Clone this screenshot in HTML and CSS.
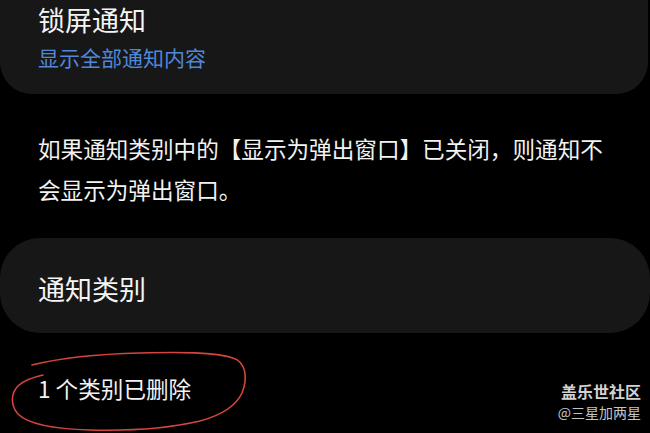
FILE: index.html
```html
<!DOCTYPE html>
<html lang="zh-CN">
<head>
    <meta charset="UTF-8">
    <meta name="viewport" content="width=device-width, initial-scale=1.0">
    <title>通知</title>
    <link rel="stylesheet" href="styles.css">
</head>
<body>
    <div class="pantalla">
        <div class="tarjeta tarjeta-arriba">
            <p class="titulo">锁屏通知</p>
            <p class="subtitulo">显示全部通知内容</p>
        </div>

        <p class="descripcion">如果通知类别中的【显示为弹出窗口】已关闭，则通知不会显示为弹出窗口。</p>

        <div class="tarjeta tarjeta-categoria">
            <p class="titulo">通知类别</p>
        </div>

        <p class="eliminado">1 个类别已删除</p>

        <svg class="marca" width="650" height="433" viewBox="0 0 650 433">
            <path d="M32 365 C 60 358, 100 354, 140 353 C 180 352, 215 352, 233 358 C 246 362, 248 378, 242 393 C 236 406, 222 415, 200 421 C 170 428, 130 431, 90 430 C 55 429, 28 424, 18 414 C 10 405, 11 393, 18 386 C 24 380, 34 377, 43 375"
                  fill="none" stroke="#d6453d" stroke-width="1.6" stroke-linecap="round"/>
        </svg>

        <div class="agua">
            <span class="agua-uno">盖乐世社区</span>
            <span class="agua-dos">@三星加两星</span>
        </div>
    </div>
</body>
</html>
```

FILE: styles.css
```css
body {
    margin: 0;
    background-color: #000000;
    font-family: "Noto Sans CJK SC", "Noto Sans", sans-serif;
    color: #f2f2f2;
}
.pantalla {
    position: relative;
    width: 650px;
    height: 433px;
    overflow: hidden;
}
p {
    margin: 0;
}
.tarjeta {
    background-color: #171717;
    padding: 0 38px;
}
.tarjeta-arriba {
    border-radius: 0 0 32px 32px;
    padding-top: 2px;
    padding-bottom: 23px;
    margin-right: 2px;
}
.titulo {
    font-size: 27px;
    line-height: 36px;
    color: #f4f4f4;
}
.subtitulo {
    font-size: 21px;
    line-height: 28px;
    margin-top: 5px;
    color: #4f88d8;
}
.descripcion {
    margin: 34px 0 28px;
    padding: 0 38px;
    width: 576px;
    font-size: 22.6px;
    line-height: 41px;
}
.tarjeta-categoria {
    border-radius: 40px;
    padding-top: 33px;
    padding-bottom: 26px;
}
.eliminado {
    margin-top: 36px;
    padding: 0 38px;
    font-size: 22.6px;
    line-height: 40px;
}
.marca {
    position: absolute;
    top: 0;
    left: 0;
}
.agua {
    position: absolute;
    right: 9px;
    top: 380px;
    display: flex;
    flex-direction: column;
    align-items: flex-end;
}
.agua-uno {
    font-size: 16px;
    font-weight: bold;
    line-height: 22px;
    color: #d2d2d2;
}
.agua-dos {
    font-size: 14px;
    line-height: 20px;
    color: #c4c4c4;
}
```
